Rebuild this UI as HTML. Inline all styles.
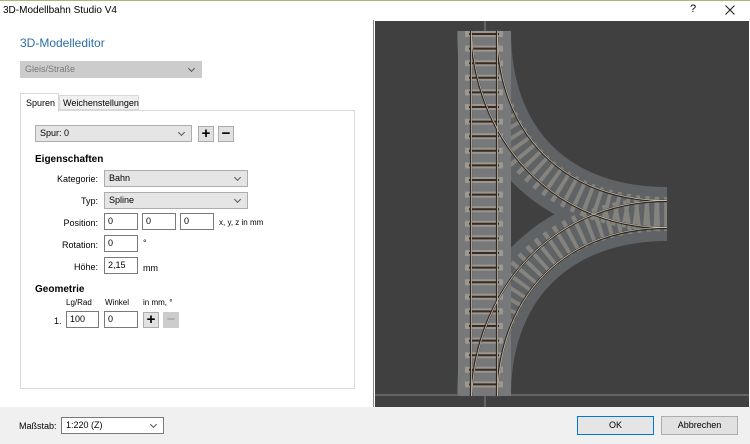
<!DOCTYPE html>
<html><head><meta charset="utf-8"><style>
*{box-sizing:border-box;margin:0;padding:0}
body{width:750px;height:444px;overflow:hidden;background:#fff;font-family:"Liberation Sans",sans-serif;font-size:9px;color:#000;position:relative}
.a{position:absolute}
.inp{position:absolute;border:1px solid #7a7a7a;background:#fff;height:17px;padding:2px 3px;font-size:9px}
.sel{position:absolute;border:1px solid #adadad;background:#e5e5e5;height:17px;padding:2px 4px;font-size:9px}
.sel:after{content:"";position:absolute;right:7px;top:4px;width:4px;height:4px;border-right:1px solid #555;border-bottom:1px solid #555;transform:rotate(45deg)}
.btn{position:absolute;border:1px solid #adadad;background:#e1e1e1;width:16px;height:16px;text-align:center;font-size:15px;line-height:14px;font-weight:bold}
.lb{position:absolute;text-align:right;font-size:9px}
</style></head><body>
<div class="a" style="left:0;top:0;width:750px;height:1px;background:#a9b67a"></div>
<div class="a" style="left:3px;top:5px;font-size:10px">3D-Modellbahn Studio V4</div>
<div class="a" style="left:690px;top:3px;font-size:11px">?</div>
<svg class="a" style="left:725px;top:5px" width="10" height="10"><path d="M0.5,0.5 L9.5,9.5 M9.5,0.5 L0.5,9.5" stroke="#222" stroke-width="1.1"/></svg>
<div class="a" style="left:373px;top:20px;width:1px;height:388px;background:#888"></div>
<div class="a" style="left:20px;top:36px;font-size:12px;color:#2e6ea8">3D-Modelleditor</div>
<div class="sel" style="left:20px;top:61px;width:182px;color:#7a7a7a;background:#ccc;border-color:#ccc">Gleis/Straße</div>
<div class="a" style="left:20px;top:110px;width:335px;height:279px;border:1px solid #d9d9d9;background:#fff"></div>
<div class="a" style="left:20px;top:93px;width:39px;height:19px;border:1px solid #d9d9d9;border-bottom:none;background:#fff;padding:4px 5px">Spuren</div>
<div class="a" style="left:59px;top:95px;width:80px;height:15px;border:1px solid #d9d9d9;background:#f0f0f0;padding:2px 3px">Weichenstellungen</div>
<div class="sel" style="left:35px;top:125px;width:157px">Spur: 0</div>
<div class="btn" style="left:198px;top:126px">+</div>
<div class="btn" style="left:218px;top:126px">−</div>
<div class="a" style="left:35px;top:154px;font-weight:bold;font-size:10px">Eigenschaften</div>
<div class="lb" style="left:30px;width:68px;top:174px">Kategorie:</div>
<div class="sel" style="left:104px;top:170px;width:144px">Bahn</div>
<div class="lb" style="left:30px;width:68px;top:196px">Typ:</div>
<div class="sel" style="left:104px;top:192px;width:144px">Spline</div>
<div class="lb" style="left:30px;width:68px;top:218px">Position:</div>
<div class="inp" style="left:104px;top:213px;width:34px">0</div>
<div class="inp" style="left:142px;top:213px;width:34px">0</div>
<div class="inp" style="left:180px;top:213px;width:34px">0</div>
<div class="a" style="left:219px;top:218px;font-size:8px">x, y, z in mm</div>
<div class="lb" style="left:30px;width:68px;top:240px">Rotation:</div>
<div class="inp" style="left:104px;top:235px;width:34px">0</div>
<div class="a" style="left:143px;top:238px">°</div>
<div class="lb" style="left:30px;width:68px;top:262px">Höhe:</div>
<div class="inp" style="left:104px;top:257px;width:34px">2,15</div>
<div class="a" style="left:143px;top:263px">mm</div>
<div class="a" style="left:35px;top:284px;font-weight:bold;font-size:10px">Geometrie</div>
<div class="a" style="left:66px;top:298px;font-size:8px">Lg/Rad</div>
<div class="a" style="left:105px;top:298px;font-size:8px">Winkel</div>
<div class="a" style="left:143px;top:298px;font-size:8px">in mm, °</div>
<div class="a" style="left:54px;top:316px">1.</div>
<div class="inp" style="left:66px;top:311px;width:33px">100</div>
<div class="inp" style="left:104px;top:311px;width:34px">0</div>
<div class="btn" style="left:143px;top:312px">+</div>
<div class="btn" style="left:163px;top:312px;background:#ccc;color:#999;border-color:#ccc;font-weight:normal">−</div>
<div class="a" style="left:0;top:407px;width:750px;height:37px;background:#f0f0f0"></div>
<div class="a" style="left:19px;top:421px">Maßstab:</div>
<div class="sel" style="left:61px;top:417px;width:103px;background:#fff;border-color:#7a7a7a">1:220 (Z)</div>
<div class="a" style="left:577px;top:416px;width:77px;height:19px;border:1px solid #0078d7;background:#e5e5e5;text-align:center;line-height:17px">OK</div>
<div class="a" style="left:661px;top:416px;width:77px;height:19px;border:1px solid #adadad;background:#e1e1e1;text-align:center;line-height:17px">Abbrechen</div>
<svg class="a" style="left:375px;top:21px" width="374" height="386" viewBox="375 21 374 386">
<rect x="375" y="21" width="374" height="386" fill="#404040"/>
<line x1="485" y1="21" x2="485" y2="407" stroke="#888"/>
<line x1="375" y1="395" x2="749" y2="395" stroke="#888"/>
<g fill="none" stroke="#606365" stroke-width="54">
<path d="M484,31 C484,150 560,214 667,214"/>
<path d="M484,396 C484,280 560,214 667,214"/>
</g>
<g fill="none" stroke="#84837e" stroke-width="34" stroke-dasharray="4 6">
<path d="M484,31 C484,150 560,214 667,214"/>
<path d="M484,396 C484,280 560,214 667,214"/>
</g>
<rect x="458" y="31" width="53" height="365" fill="#76787a"/>
<line x1="484" y1="31" x2="484" y2="396" stroke="#9a9890" stroke-width="38" stroke-dasharray="6 8.6"/>
<line x1="484" y1="31" x2="484" y2="396" stroke="#3a2a20" stroke-width="30" stroke-dasharray="2 12.6" stroke-dashoffset="-2"/>
<g fill="none" stroke="#2e2620" stroke-width="2.2">
<line x1="471" y1="31" x2="471" y2="396"/><line x1="497" y1="31" x2="497" y2="396"/>
<path d="M471,35 C478,150 560,228 667,228"/>
<path d="M497,35 C500,140 570,201 667,201"/>
<path d="M471,396 C478,280 560,201 667,201"/>
<path d="M497,396 C500,290 570,228 667,228"/>
</g>
<g fill="none" stroke="#c8c0b0" stroke-width="0.8">
<line x1="471.5" y1="31" x2="471.5" y2="396"/><line x1="497.5" y1="31" x2="497.5" y2="396"/>
<path d="M471.5,35 C478.5,150 560,227.5 667,227.5"/>
<path d="M497.5,35 C500.5,140 570,200.5 667,200.5"/>
<path d="M471.5,396 C478.5,280 560,200.5 667,200.5"/>
<path d="M497.5,396 C500.5,290 570,227.5 667,227.5"/>
</g>
</svg>
</body></html>
